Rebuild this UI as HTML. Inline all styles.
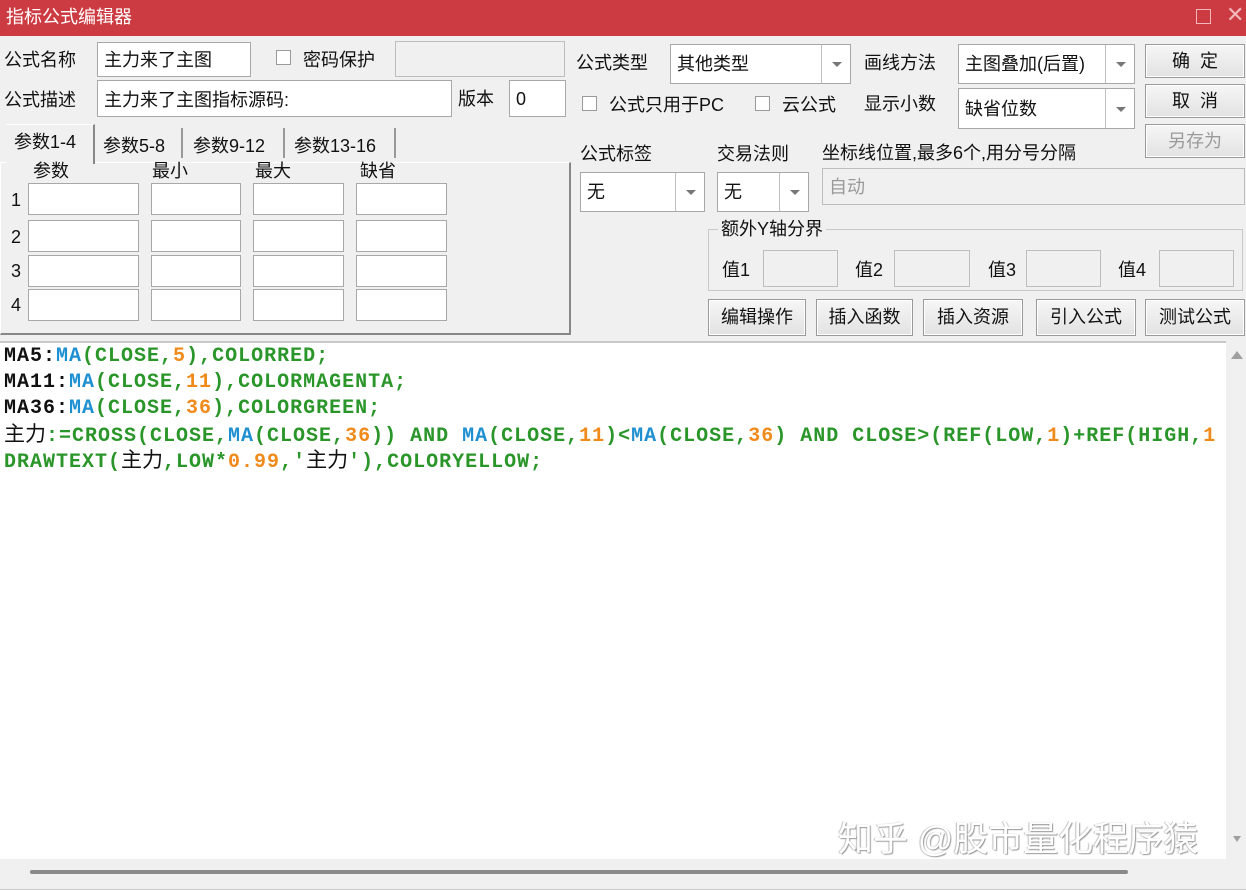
<!DOCTYPE html>
<html><head><meta charset="utf-8"><style>
*{box-sizing:border-box;margin:0;padding:0}
body{width:1246px;height:890px;background:#f0f0f0;position:relative;overflow:hidden;font-family:"Liberation Sans","Noto Sans CJK SC",sans-serif;font-size:18px;color:#111}
.a{position:absolute;white-space:nowrap}
.t{position:absolute;white-space:nowrap;line-height:20px}
.in{position:absolute;background:#fff;border:1px solid #a8a8a8}
.ro{position:absolute;background:#f0f0f0;border:1px solid #bdbdbd}
.cb{position:absolute;width:15px;height:15px;background:#fff;border:1px solid #9a9a9a}
.cmb{position:absolute;background:#fff;border:1px solid #a8a8a8}
.cmb .d{position:absolute;right:0;top:0;bottom:0;width:29px;border-left:1px solid #c0c0c0}
.cmb .d:after{content:"";position:absolute;left:10px;top:50%;margin-top:-2px;border-left:5px solid transparent;border-right:5px solid transparent;border-top:5px solid #777}
.cmb span{position:absolute;left:6px;top:50%;margin-top:-11px;line-height:22px}
.btn{position:absolute;background:linear-gradient(#f6f6f6,#e2e2e2);border:1px solid #9a9a9a;box-shadow:inset 0 0 0 1px #fff;text-align:center;line-height:32px}
.code{position:absolute;left:0;top:341px;width:1226px;height:518px;background:#fff;border-top:2px solid #c8c8c8;font-family:"Liberation Mono",monospace;font-weight:bold;font-size:20px;letter-spacing:1px}
.code div{position:absolute;left:4px;white-space:nowrap;line-height:26px;height:26px}
.k{color:#111}.b{color:#1e8fd0}.g{color:#2a962a}.o{color:#f08a1a}
.cj{font-family:"Liberation Sans","Noto Sans CJK SC",sans-serif;font-weight:normal;font-size:21px;color:#111;letter-spacing:0}
</style></head><body>
<div class="a" style="left:0;top:0;width:1246px;height:36px;background:#cc3b42"></div>
<div class="t" style="left:6px;top:7px;color:#fff;font-size:18px">指标公式编辑器</div>
<div class="a" style="left:1196px;top:9px;width:15px;height:15px;border:1px solid #f2b8bb"></div>
<div class="t" style="left:1226px;top:5px;color:#f2b8bb;font-size:22px">✕</div>

<div class="t" style="left:4px;top:50px">公式名称</div>
<div class="in" style="left:97px;top:42px;width:154px;height:35px"></div>
<div class="t" style="left:104px;top:50px">主力来了主图</div>
<div class="cb" style="left:276px;top:50px"></div>
<div class="t" style="left:303px;top:50px">密码保护</div>
<div class="ro" style="left:395px;top:41px;width:170px;height:36px"></div>

<div class="t" style="left:4px;top:90px">公式描述</div>
<div class="in" style="left:97px;top:80px;width:355px;height:37px"></div>
<div class="t" style="left:104px;top:90px">主力来了主图指标源码:</div>
<div class="t" style="left:458px;top:89px">版本</div>
<div class="in" style="left:509px;top:80px;width:57px;height:37px"></div>
<div class="t" style="left:516px;top:89px">0</div>

<div class="a" style="left:0;top:162px;width:571px;height:173px;border:1px solid #fff;border-right:2px solid #888;border-bottom:2px solid #888"></div>
<div class="a" style="left:6px;top:124px;width:89px;height:40px;background:#f0f0f0;border-right:2px solid #888;border-top:1px solid #fff"></div>
<div class="t" style="left:14px;top:132px">参数1-4</div>
<div class="t" style="left:103px;top:136px">参数5-8</div>
<div class="a" style="left:181px;top:128px;width:2px;height:30px;background:#999"></div>
<div class="t" style="left:193px;top:136px">参数9-12</div>
<div class="a" style="left:283px;top:128px;width:2px;height:30px;background:#999"></div>
<div class="t" style="left:294px;top:136px">参数13-16</div>
<div class="a" style="left:394px;top:128px;width:2px;height:30px;background:#999"></div>

<div class="t" style="left:33px;top:161px">参数</div>
<div class="t" style="left:152px;top:161px">最小</div>
<div class="t" style="left:255px;top:161px">最大</div>
<div class="t" style="left:360px;top:161px">缺省</div>

<div class="t" style="left:11px;top:190px">1</div>
<div class="t" style="left:11px;top:227px">2</div>
<div class="t" style="left:11px;top:261px">3</div>
<div class="t" style="left:11px;top:295px">4</div>
<div class="in" style="left:28px;top:183px;width:111px;height:32px"></div><div class="in" style="left:151px;top:183px;width:90px;height:32px"></div><div class="in" style="left:253px;top:183px;width:91px;height:32px"></div><div class="in" style="left:356px;top:183px;width:91px;height:32px"></div>
<div class="in" style="left:28px;top:220px;width:111px;height:32px"></div><div class="in" style="left:151px;top:220px;width:90px;height:32px"></div><div class="in" style="left:253px;top:220px;width:91px;height:32px"></div><div class="in" style="left:356px;top:220px;width:91px;height:32px"></div>
<div class="in" style="left:28px;top:255px;width:111px;height:32px"></div><div class="in" style="left:151px;top:255px;width:90px;height:32px"></div><div class="in" style="left:253px;top:255px;width:91px;height:32px"></div><div class="in" style="left:356px;top:255px;width:91px;height:32px"></div>
<div class="in" style="left:28px;top:289px;width:111px;height:32px"></div><div class="in" style="left:151px;top:289px;width:90px;height:32px"></div><div class="in" style="left:253px;top:289px;width:91px;height:32px"></div><div class="in" style="left:356px;top:289px;width:91px;height:32px"></div>

<div class="t" style="left:576px;top:53px">公式类型</div>
<div class="cmb" style="left:670px;top:44px;width:181px;height:40px"><span>其他类型</span><div class="d"></div></div>
<div class="t" style="left:864px;top:53px">画线方法</div>
<div class="cmb" style="left:958px;top:44px;width:177px;height:40px"><span>主图叠加(后置)</span><div class="d"></div></div>
<div class="btn" style="left:1145px;top:44px;width:100px;height:34px">确&nbsp;&nbsp;定</div>
<div class="btn" style="left:1145px;top:84px;width:100px;height:34px">取&nbsp;&nbsp;消</div>
<div class="btn" style="left:1145px;top:124px;width:100px;height:34px;color:#9a9a9a">另存为</div>

<div class="cb" style="left:582px;top:96px"></div>
<div class="t" style="left:609px;top:95px">公式只用于PC</div>
<div class="cb" style="left:755px;top:96px"></div>
<div class="t" style="left:782px;top:95px">云公式</div>
<div class="t" style="left:864px;top:94px">显示小数</div>
<div class="cmb" style="left:958px;top:88px;width:177px;height:41px"><span>缺省位数</span><div class="d"></div></div>

<div class="t" style="left:580px;top:144px">公式标签</div>
<div class="t" style="left:717px;top:144px">交易法则</div>
<div class="t" style="left:822px;top:143px">坐标线位置,最多6个,用分号分隔</div>
<div class="cmb" style="left:580px;top:172px;width:125px;height:40px"><span>无</span><div class="d"></div></div>
<div class="cmb" style="left:717px;top:172px;width:92px;height:40px"><span>无</span><div class="d"></div></div>
<div class="ro" style="left:822px;top:168px;width:423px;height:37px"></div>
<div class="t" style="left:829px;top:177px;color:#999">自动</div>

<div class="a" style="left:708px;top:229px;width:535px;height:62px;border:1px solid #c8c8c8"></div>
<div class="t" style="left:718px;top:219px;background:#f0f0f0;padding:0 3px">额外Y轴分界</div>
<div class="t" style="left:722px;top:260px">值1</div><div class="ro" style="left:763px;top:250px;width:75px;height:37px"></div>
<div class="t" style="left:855px;top:260px">值2</div><div class="ro" style="left:894px;top:250px;width:76px;height:37px"></div>
<div class="t" style="left:988px;top:260px">值3</div><div class="ro" style="left:1026px;top:250px;width:75px;height:37px"></div>
<div class="t" style="left:1118px;top:260px">值4</div><div class="ro" style="left:1159px;top:250px;width:75px;height:37px"></div>

<div class="btn" style="left:708px;top:299px;width:98px;height:37px;line-height:35px">编辑操作</div>
<div class="btn" style="left:816px;top:299px;width:97px;height:37px;line-height:35px">插入函数</div>
<div class="btn" style="left:923px;top:299px;width:100px;height:37px;line-height:35px">插入资源</div>
<div class="btn" style="left:1036px;top:299px;width:100px;height:37px;line-height:35px">引入公式</div>
<div class="btn" style="left:1145px;top:299px;width:100px;height:37px;line-height:35px">测试公式</div>

<div class="code">
<div style="top:1px"><span class="k">MA5:</span><span class="b">MA</span><span class="g">(CLOSE,</span><span class="o">5</span><span class="g">),COLORRED;</span></div>
<div style="top:27px"><span class="k">MA11:</span><span class="b">MA</span><span class="g">(CLOSE,</span><span class="o">11</span><span class="g">),COLORMAGENTA;</span></div>
<div style="top:53px"><span class="k">MA36:</span><span class="b">MA</span><span class="g">(CLOSE,</span><span class="o">36</span><span class="g">),COLORGREEN;</span></div>
<div style="top:79px"><span class="cj">主力</span><span class="g">:=CROSS(CLOSE,</span><span class="b">MA</span><span class="g">(CLOSE,</span><span class="o">36</span><span class="g">)) AND </span><span class="b">MA</span><span class="g">(CLOSE,</span><span class="o">11</span><span class="g">)&lt;</span><span class="b">MA</span><span class="g">(CLOSE,</span><span class="o">36</span><span class="g">) AND CLOSE&gt;(REF(LOW,</span><span class="o">1</span><span class="g">)+REF(HIGH,</span><span class="o">1</span></div>
<div style="top:105px"><span class="g">DRAWTEXT(</span><span class="cj">主力</span><span class="g">,LOW*</span><span class="o">0.99</span><span class="g">,'</span><span class="cj">主力</span><span class="g">'),COLORYELLOW;</span></div>
</div>
<div class="a" style="left:1226px;top:343px;width:20px;height:516px;background:#f0f0f0"></div>
<div class="a" style="left:1231px;top:351px;border-left:6px solid transparent;border-right:6px solid transparent;border-bottom:8px solid #a0a0a0"></div>
<div class="a" style="left:1233px;top:836px;border-left:4px solid transparent;border-right:4px solid transparent;border-top:6px solid #a0a0a0"></div>
<div class="a" style="left:0;top:859px;width:1246px;height:31px;background:#f0f0f0;border-bottom:1px solid #c8c8c8"></div>
<div class="a" style="left:30px;top:870px;width:1098px;height:4px;background:#8a8a8a;border-radius:2px"></div>
<div class="t" style="left:838px;top:820px;font-size:35px;line-height:40px;letter-spacing:0;color:#fff;text-shadow:1px 1px 1px #999,-1px 0 1px #bbb">知乎 @股市量化程序猿</div>
</body></html>
